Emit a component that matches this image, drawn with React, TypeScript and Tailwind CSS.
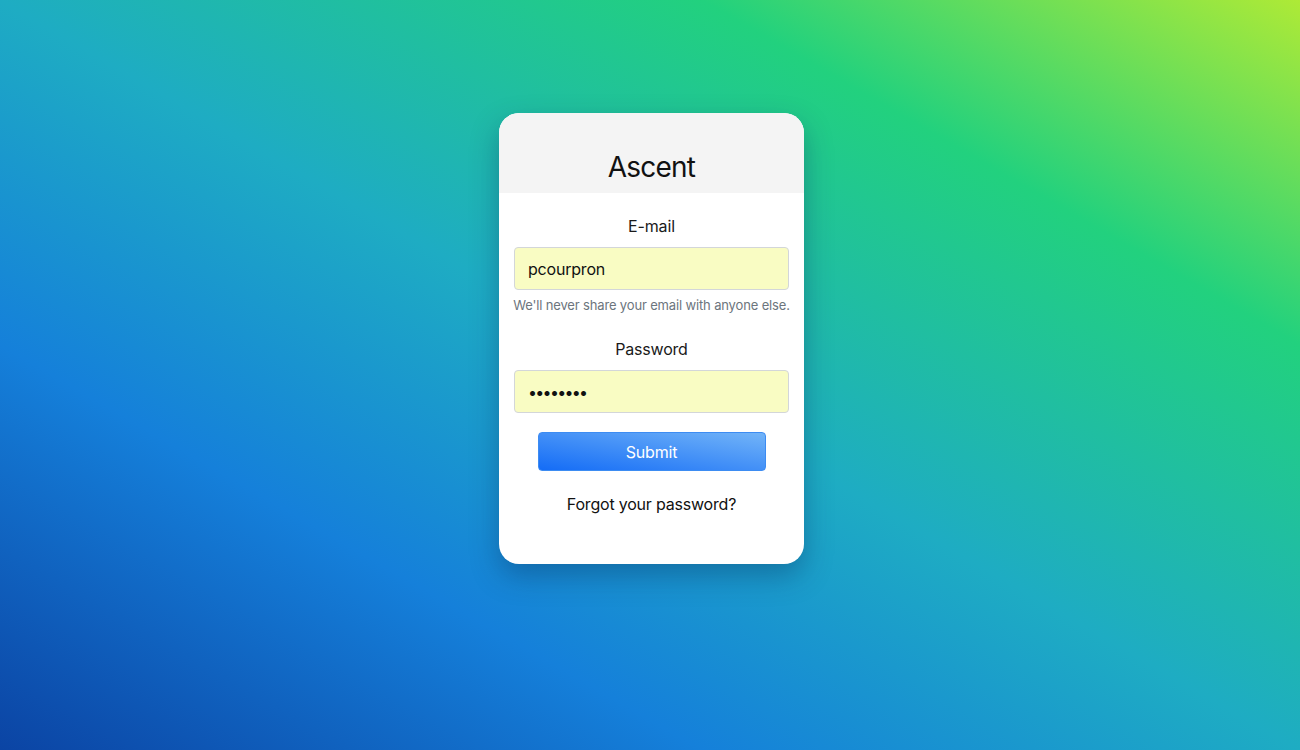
import React from "react";

export default function App() {
  return (
    <div
      className="w-[1300px] h-[750px] overflow-hidden flex justify-center pt-[113px] pl-[3px] bg-[linear-gradient(to_top_right,#0b44a4_0%,#1580da_27%,#1eacc3_50%,#22d17e_77%,#aeea36_100%)]"
      style={{ fontFamily: "Inter, 'Liberation Sans', sans-serif" }}
    >
      <div className="w-[305px] h-[451px] bg-white rounded-[20px] overflow-hidden shadow-[0_12px_28px_rgba(10,40,90,0.35)] flex flex-col">
        <div className="h-[80px] bg-[#f4f4f4] flex justify-center pt-[35px]">
          <h1 className="text-[28px] leading-[38px] tracking-[-0.8px] text-[#111] font-normal">Ascent</h1>
        </div>
        <div className="flex flex-col items-center px-[15px] pt-[21px]">
          <label className="text-[16px] leading-[24px] tracking-[-0.1px] text-[#1a1a1a]">E-mail</label>
          <input
            type="text"
            defaultValue="pcourpron"
            className="mt-[9px] w-full h-[43px] px-[13px] rounded-[4px] border border-[#d3d6d9] bg-[#f9fcc3] text-[16px] tracking-[-0.2px] text-[#111] outline-none"
          />
          <p className="mt-[5px] text-[13px] leading-[20px] tracking-[-0.15px] text-[#6c757d] whitespace-nowrap">
            We'll never share your email with anyone else.
          </p>
          <label className="mt-[22px] text-[16px] leading-[24px] tracking-[-0.2px] text-[#1a1a1a]">Password</label>
          <input
            type="password"
            defaultValue="12345678"
            className="mt-[9px] w-full h-[43px] px-[13px] rounded-[4px] border border-[#d3d6d9] bg-[#f9fcc3] text-[16px] text-[#111] outline-none tracking-[-1.7px]"
          />
          <button className="mt-[19px] w-[228px] h-[39px] rounded-[4px] border border-[#3d8cf2] bg-[linear-gradient(to_top_right,#146cf6,#72b4f8)] text-white text-[16px] tracking-[-0.2px]">
            Submit
          </button>
          <a className="mt-[21px] text-[16px] leading-[24px] tracking-[-0.2px] text-[#111]">Forgot your password?</a>
        </div>
      </div>
    </div>
  );
}
